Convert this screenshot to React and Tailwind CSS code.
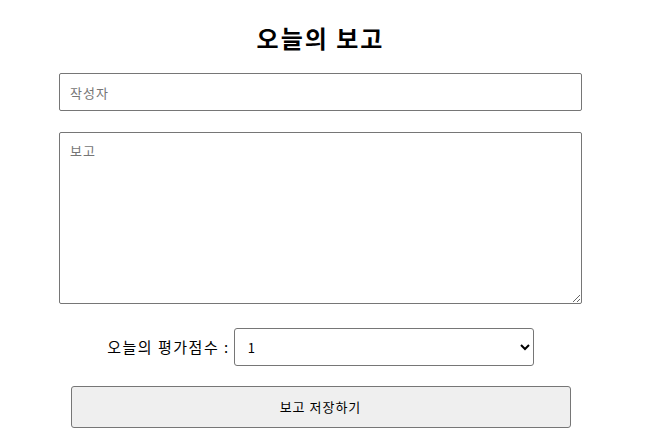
import React from 'react';

export default function App() {
    return (
        <div className="w-[641px] min-h-[442px] bg-white text-black font-['Noto_Sans_CJK_KR','Noto_Sans',sans-serif]">
            {/* Title */}
            <h1 className="pt-[22px] h-[53px] text-center text-[24px] leading-[32px] font-bold tracking-[2px]">오늘의 보고</h1>

            {/* Author */}
            <input
                type="text"
                placeholder="작성자"
                className="block mx-auto mt-[20px] w-[523px] h-[38px] px-[10px] border border-[#767676] rounded-[2px] text-[13px] tracking-[1px] placeholder:text-[#757575] outline-none"
            />

            {/* Report body */}
            <textarea
                placeholder="보고"
                className="block mx-auto mt-[21px] w-[523px] h-[172px] px-[10px] py-[9px] border border-[#767676] rounded-[2px] text-[13px] leading-[18px] tracking-[1px] placeholder:text-[#757575] outline-none"
            />

            {/* Score */}
            <div className="mt-[24px] flex items-center justify-center">
                <label className="text-[15px] tracking-[1.5px] mr-[4px]">오늘의 평가점수 :</label>
                <select className="w-[300px] h-[38px] pl-[9px] pr-[6px] border border-[#767676] rounded-[3px] text-[13px] bg-white outline-none">
                    <option>1</option>
                    <option>2</option>
                    <option>3</option>
                    <option>4</option>
                    <option>5</option>
                </select>
            </div>

            {/* Save */}
            <button className="block mx-auto mt-[20px] w-[500px] h-[42px] bg-[#efefef] border border-[#767676] rounded-[3px] text-[13px] tracking-[1px]">
                보고 저장하기
            </button>
        </div>
    );
}
